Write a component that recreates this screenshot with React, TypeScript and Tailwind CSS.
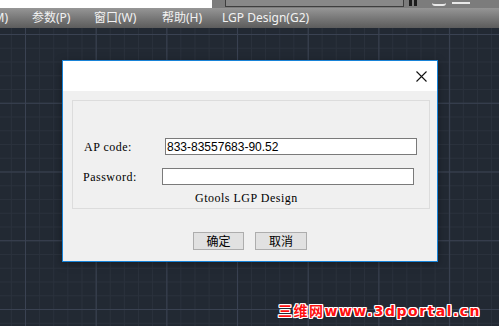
import React from 'react';

const menuItems = [
  { label: '参数(P)', width: 'w-[62px]' },
  { label: '窗口(W)', width: 'w-[68px]' },
  { label: '帮助(H)', width: 'w-[60px]' },
  { label: 'LGP Design(G2)', width: 'w-[120px]' },
];

const TopStrip = () => (
  <div className="flex h-[8px]">
    <div className="w-[212px] bg-white" />
    <div className="flex flex-1 items-start bg-[#7c7c7c] pl-[13px]">
      <div className="h-[7px] w-[179px] border-x border-b border-[#3e3e3e] bg-[#888888]" />
      <div className="ml-[5px] flex h-[6px] gap-[2px]">
        <div className="w-[3px] bg-[#1c1c1c]" />
        <div className="w-[3px] bg-[#1c1c1c]" />
      </div>
      <div className="ml-[15px] h-[6px] w-[14px] rounded-b-[3px] border-b-2 border-[#e8e8e8]" />
      <div className="ml-[6px] mt-[2px] h-[2px] w-[18px] bg-[#e8e8e8]" />
    </div>
  </div>
);

const MenuBar = () => (
  <div className="flex h-[20px] items-center bg-gradient-to-b from-[#969696] to-[#5c5c5c] font-['Noto_Sans','Noto_Sans_CJK_SC',sans-serif] text-[12px] text-[#f2f2f2] whitespace-nowrap">
    <div className="flex w-[32px]">
      <div className="flex w-[8px] justify-end">
        <span>修改(M)</span>
      </div>
    </div>
    {menuItems.map((item) => (
      <span key={item.label} className={item.width}>
        {item.label}
      </span>
    ))}
  </div>
);

const CloseIcon = () => (
  <svg width="11" height="11" viewBox="0 0 11 11">
    <path d="M0.5 0.5 L10.5 10.5 M10.5 0.5 L0.5 10.5" stroke="#111" strokeWidth="1.1" />
  </svg>
);

const Dialog = () => (
  <div className="ml-[62px] mt-[31px] flex h-[202px] w-[376px] flex-col border border-[#1883d7] shadow-[0_2px_8px_rgba(0,0,0,0.35)]">
    <div className="flex h-[30px] items-center justify-end bg-white pr-[10px]">
      <CloseIcon />
    </div>
    <div className="flex-1 bg-[#f0f0f0] px-[9px] pt-[9px] font-['Liberation_Serif',serif] text-[12px] tracking-[0.5px] text-black">
      <div className="h-[109px] w-[358px] border border-[#dcdcdc]">
        <div className="mt-[37px] flex h-[17px] items-center pl-[11px]">
          <span className="w-[81px]">AP code:</span>
          <div className="flex h-[17px] w-[252px] items-center border border-[#7a7a7a] bg-white pl-[1px] font-['Liberation_Sans',sans-serif] tracking-normal">
            833-83557683-90.52
          </div>
        </div>
        <div className="mt-[13px] flex h-[17px] items-center pl-[10px]">
          <span className="w-[79px]">Password:</span>
          <div className="h-[17px] w-[252px] border border-[#7a7a7a] bg-white" />
        </div>
        <div className="mt-[6px] pl-[122px] leading-[14px]">Gtools LGP Design</div>
      </div>
      <div className="mt-[23px] flex gap-[11px] pl-[121px] font-['Noto_Sans_CJK_SC',sans-serif] tracking-normal">
        <button className="flex h-[18px] w-[51px] items-center justify-center border border-[#adadad] bg-[#e1e1e1] text-[12px] leading-none">
          确定
        </button>
        <button className="flex h-[18px] w-[52px] items-center justify-center border border-[#adadad] bg-[#e1e1e1] text-[12px] leading-none">
          取消
        </button>
      </div>
    </div>
  </div>
);

const App = () => {
  return (
    <div className="flex h-[326px] w-[499px] flex-col overflow-hidden bg-[#222933]">
      <TopStrip />
      <MenuBar />
      <div className="relative flex-1 bg-[image:linear-gradient(to_right,#3a4252_1px,transparent_1px),linear-gradient(to_bottom,#3a4252_1px,transparent_1px),linear-gradient(to_right,#2a313c_1px,transparent_1px),linear-gradient(to_bottom,#2a313c_1px,transparent_1px)] bg-[length:70.7px_68.75px,70.7px_68.75px,14.14px_13.75px,14.14px_13.75px] bg-[position:25px_6px,25px_6px,25px_6px,25px_6px] pt-px">
        <Dialog />
        <div className="absolute left-[278px] top-[276px] font-['DejaVu_Sans','Noto_Sans_CJK_SC',sans-serif] text-[14px] font-bold leading-none tracking-[1.5px] text-[#ff1010] [text-shadow:1px_0_0_#fff,-1px_0_0_#fff,0_1px_0_#fff,0_-1px_0_#fff,1px_1px_0_#fff,-1px_-1px_0_#fff,1px_-1px_0_#fff,-1px_1px_0_#fff]">
          三维网www.3dportal.cn
        </div>
      </div>
    </div>
  );
};

export default App;
